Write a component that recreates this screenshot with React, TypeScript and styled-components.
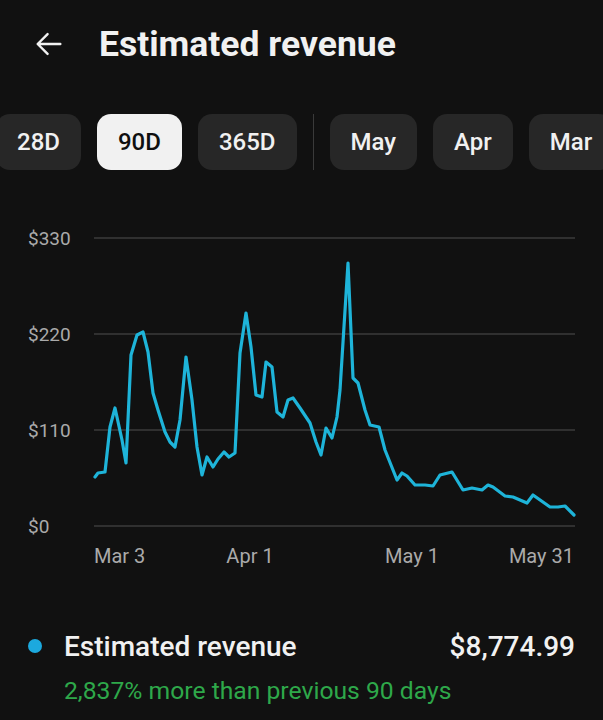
import styled, { createGlobalStyle } from "styled-components";

const GlobalStyle = createGlobalStyle`
  html, body {
    margin: 0;
    padding: 0;
    background: #111111;
  }
  body {
    font-family: Roboto, "Noto Sans", sans-serif;
    color: #f1f1f1;
  }
`;

const periods = ["28D", "90D", "365D"];
const months = ["May", "Apr", "Mar"];

// traced from the reference, in page pixels
const points: Array<[number, number]> = [
  [95, 477], [98, 473], [105, 472], [110, 427], [115, 408], [122, 440],
  [126, 463], [131, 355], [137, 335], [143, 332], [148, 352], [153, 393],
  [158, 410], [165, 432], [170, 442], [175, 447], [180, 420], [186, 357],
  [192, 400], [197, 447], [202, 475], [207, 457], [213, 467], [218, 459],
  [224, 452], [229, 457], [235, 453], [240, 353], [246, 313], [251, 347],
  [256, 395], [262, 397], [266, 362], [272, 367], [277, 412], [283, 417],
  [288, 400], [293, 398], [300, 408], [310, 423], [316, 442], [321, 455],
  [326, 428], [332, 438], [337, 417], [340, 390], [348, 263], [353, 378],
  [358, 383], [365, 410], [370, 425], [379, 427], [385, 450], [397, 480],
  [402, 473], [407, 476], [415, 485], [425, 485], [433, 486], [440, 475],
  [452, 472], [463, 490], [472, 488], [482, 490], [488, 485], [493, 487],
  [505, 496], [513, 497], [527, 503], [533, 495], [550, 507], [558, 507],
  [565, 506], [574, 515],
];

const yTicks = [
  { label: "$330", y: 238 },
  { label: "$220", y: 334 },
  { label: "$110", y: 430 },
  { label: "$0", y: 526 },
];

const xTicks = [
  { label: "Mar 3", x: 94, anchor: "start" },
  { label: "Apr 1", x: 250, anchor: "middle" },
  { label: "May 1", x: 412, anchor: "middle" },
  { label: "May 31", x: 574, anchor: "end" },
];

const App = () => {
  return (
    <Page>
      <GlobalStyle />
      <Header>
        <BackButton aria-label="Back">
          <svg width="34" height="34" viewBox="0 0 24 24" fill="none">
            <path
              d="M20 12H4.5M11 5l-7 7 7 7"
              stroke="#f1f1f1"
              strokeWidth="1.7"
              strokeLinecap="round"
              strokeLinejoin="round"
            />
          </svg>
        </BackButton>
        <Title>Estimated revenue</Title>
      </Header>

      <ChipRow>
        {periods.map((p) => (
          <Chip key={p} active={p === "90D"}>
            {p}
          </Chip>
        ))}
        <Divider />
        {months.map((m) => (
          <Chip key={m}>{m}</Chip>
        ))}
      </ChipRow>

      <ChartWrap>
        <svg width="603" height="360" viewBox="0 220 603 360">
          {yTicks.map((t) => (
            <g key={t.label}>
              <line x1="94" x2="575" y1={t.y} y2={t.y} stroke="#3b3b3b" strokeWidth="1.5" />
              <text
                x="28"
                y={t.y + 7}
                fill="#aaaaaa"
                fontSize="19"
                fontFamily="Roboto, sans-serif"
              >
                {t.label}
              </text>
            </g>
          ))}
          <polyline
            points={points.map((p) => p.join(",")).join(" ")}
            fill="none"
            stroke="#1eb4d9"
            strokeWidth="3.2"
            strokeLinejoin="round"
            strokeLinecap="round"
          />
          {xTicks.map((t) => (
            <text
              key={t.label}
              x={t.x}
              y="563"
              textAnchor={t.anchor}
              fill="#aaaaaa"
              fontSize="20"
              fontFamily="Roboto, sans-serif"
            >
              {t.label}
            </text>
          ))}
        </svg>
      </ChartWrap>

      <Legend>
        <LegendRow>
          <Dot />
          <LegendName>Estimated revenue</LegendName>
          <LegendValue>$8,774.99</LegendValue>
        </LegendRow>
        <Change>2,837% more than previous 90 days</Change>
      </Legend>
    </Page>
  );
};

export default App;

const Page = styled.div`
  width: 603px;
  height: 720px;
  overflow: hidden;
  background: #111111;
`;

const Header = styled.div`
  height: 88px;
  display: flex;
  align-items: center;
  padding-left: 32px;
`;

const BackButton = styled.div`
  width: 34px;
  height: 34px;
  display: flex;
  align-items: center;
  justify-content: center;
  margin-right: 33px;
`;

const Title = styled.h1`
  margin: 0;
  font-size: 35.5px;
  font-weight: 700;
  color: #f1f1f1;
`;

const ChipRow = styled.div`
  margin-top: 26px;
  margin-left: -4px;
  display: flex;
  align-items: center;
  gap: 16px;
  white-space: nowrap;
`;

const Chip = styled.div<{ active?: boolean }>`
  flex: none;
  height: 56px;
  padding: 0 21px;
  border-radius: 14px;
  display: flex;
  align-items: center;
  font-size: 24px;
  font-weight: 500;
  background: ${(p) => (p.active ? "#f1f1f1" : "#272727")};
  color: ${(p) => (p.active ? "#0f0f0f" : "#f1f1f1")};
`;

const Divider = styled.div`
  flex: none;
  width: 1px;
  height: 56px;
  background: #3a3a3a;
`;

const ChartWrap = styled.div`
  margin-top: 50px;
  height: 360px;

  svg {
    display: block;
  }
`;

const Legend = styled.div`
  margin-top: 46px;
  padding-left: 28px;
  padding-right: 28px;
`;

const LegendRow = styled.div`
  height: 40px;
  display: flex;
  align-items: center;
`;

const Dot = styled.span`
  width: 14px;
  height: 14px;
  border-radius: 50%;
  background: #1ca9de;
  margin-right: 22px;
`;

const LegendName = styled.span`
  flex: 1;
  font-size: 28px;
  font-weight: 500;
  color: #f1f1f1;
`;

const LegendValue = styled.span`
  font-size: 28px;
  font-weight: 500;
  color: #f1f1f1;
`;

const Change = styled.div`
  margin-top: 10px;
  padding-left: 36px;
  font-size: 24.7px;
  color: #2ea84a;
`;
